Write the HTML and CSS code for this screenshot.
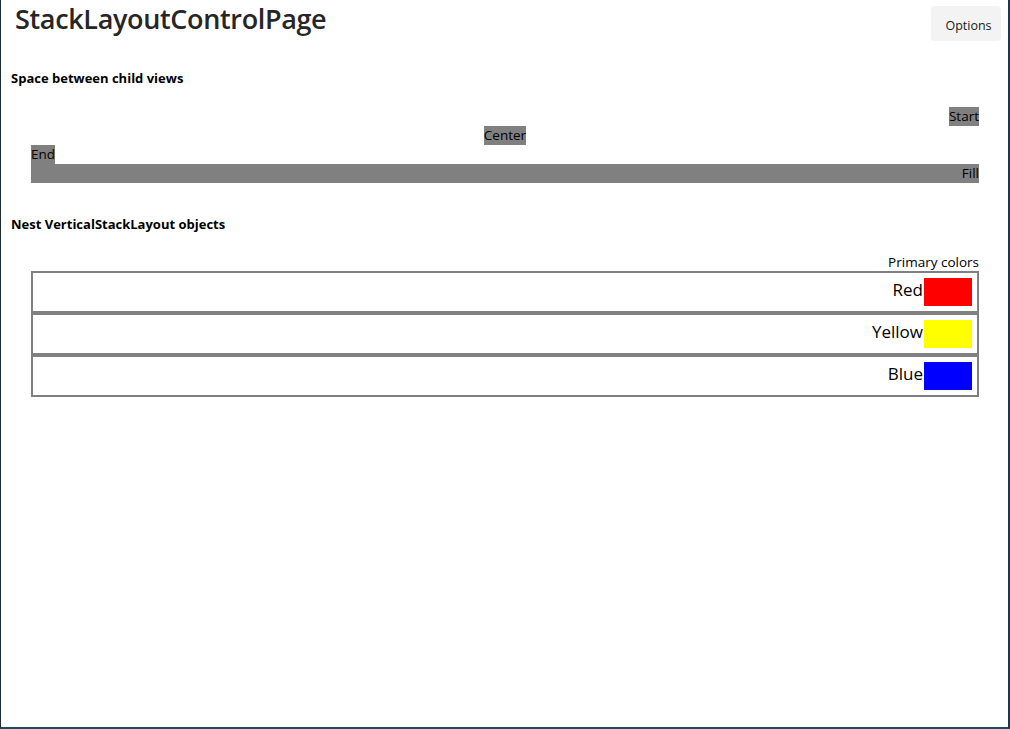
FILE: index.html
```html
<!DOCTYPE html>
<html>
<head>
<meta charset="utf-8">
<link rel="stylesheet" href="styles.css">
</head>
<body>
<div class="window">
  <header class="topbar">
    <h1 class="title">StackLayoutControlPage</h1>
    <button class="options">Options</button>
  </header>
  <main class="content">
    <h2 class="section">Space between child views</h2>
    <div class="stack">
      <div class="item start">Start</div>
      <div class="item center">Center</div>
      <div class="item end">End</div>
      <div class="item fill">Fill</div>
    </div>
    <h2 class="section second">Nest VerticalStackLayout objects</h2>
    <div class="nested">
      <div class="caption">Primary colors</div>
      <div class="frame"><span class="label">Red</span><span class="swatch red"></span></div>
      <div class="frame"><span class="label">Yellow</span><span class="swatch yellow"></span></div>
      <div class="frame"><span class="label">Blue</span><span class="swatch blue"></span></div>
    </div>
  </main>
</div>
</body>
</html>
```
FILE: styles.css
```css
* { box-sizing: border-box; }
html, body { margin: 0; padding: 0; background: #ffffff; }
body { font-family: "Segoe UI", "Open Sans", "Noto Sans", sans-serif; color: #000; }

.window {
  width: 1010px;
  height: 729px;
  border-left: 1px solid #1b2a33;
  border-right: 2px solid #1d3550;
  border-bottom: 2px solid #1d4a60;
  background: #fff;
  overflow: hidden;
}

.topbar {
  display: flex;
  justify-content: space-between;
  align-items: flex-start;
  padding: 0 7px 0 14px;
  height: 54px;
}

.title {
  margin: 0;
  font-size: 27px;
  font-weight: 600;
  line-height: 37px;
  color: #262626;
  letter-spacing: -0.35px;
}

.options {
  margin-top: 6px;
  width: 70px;
  height: 35px;
  border: none;
  border-radius: 4px;
  background: #f3f3f3;
  font-family: inherit;
  font-size: 12.5px;
  color: #1a1a1a;
  padding: 3px 0 0 5px;
}

.content { padding: 0 29px 0 10px; }

.section {
  margin: 15px 0 0 0;
  font-size: 13px;
  font-weight: 700;
  line-height: 18px;
}
.section.second { margin-top: 32px; }

.stack {
  display: flex;
  flex-direction: column;
  margin: 20px 0 0 20px;
}
.item {
  background: #808080;
  font-size: 13.5px;
  line-height: 19px;
  height: 19px;
  color: #000;
}
.start { align-self: flex-end; }
.center { align-self: center; }
.end { align-self: flex-start; }
.fill { align-self: stretch; text-align: right; }

.nested {
  margin: 20px 0 0 20px;
  display: flex;
  flex-direction: column;
}
.caption {
  text-align: right;
  font-size: 13.5px;
  line-height: 18px;
  height: 18px;
}
.frame {
  display: flex;
  justify-content: flex-end;
  align-items: center;
  height: 42px;
  border: 2px solid #808080;
  padding: 4px 5px 4px 0;
}
.label {
  font-size: 17px;
  line-height: 24px;
  margin-bottom: 4px;
}
.swatch {
  width: 48px;
  height: 28px;
  display: block;
  margin-left: 1px;
}
.red { background: #ff0000; }
.yellow { background: #ffff00; }
.blue { background: #0000ff; }
```
